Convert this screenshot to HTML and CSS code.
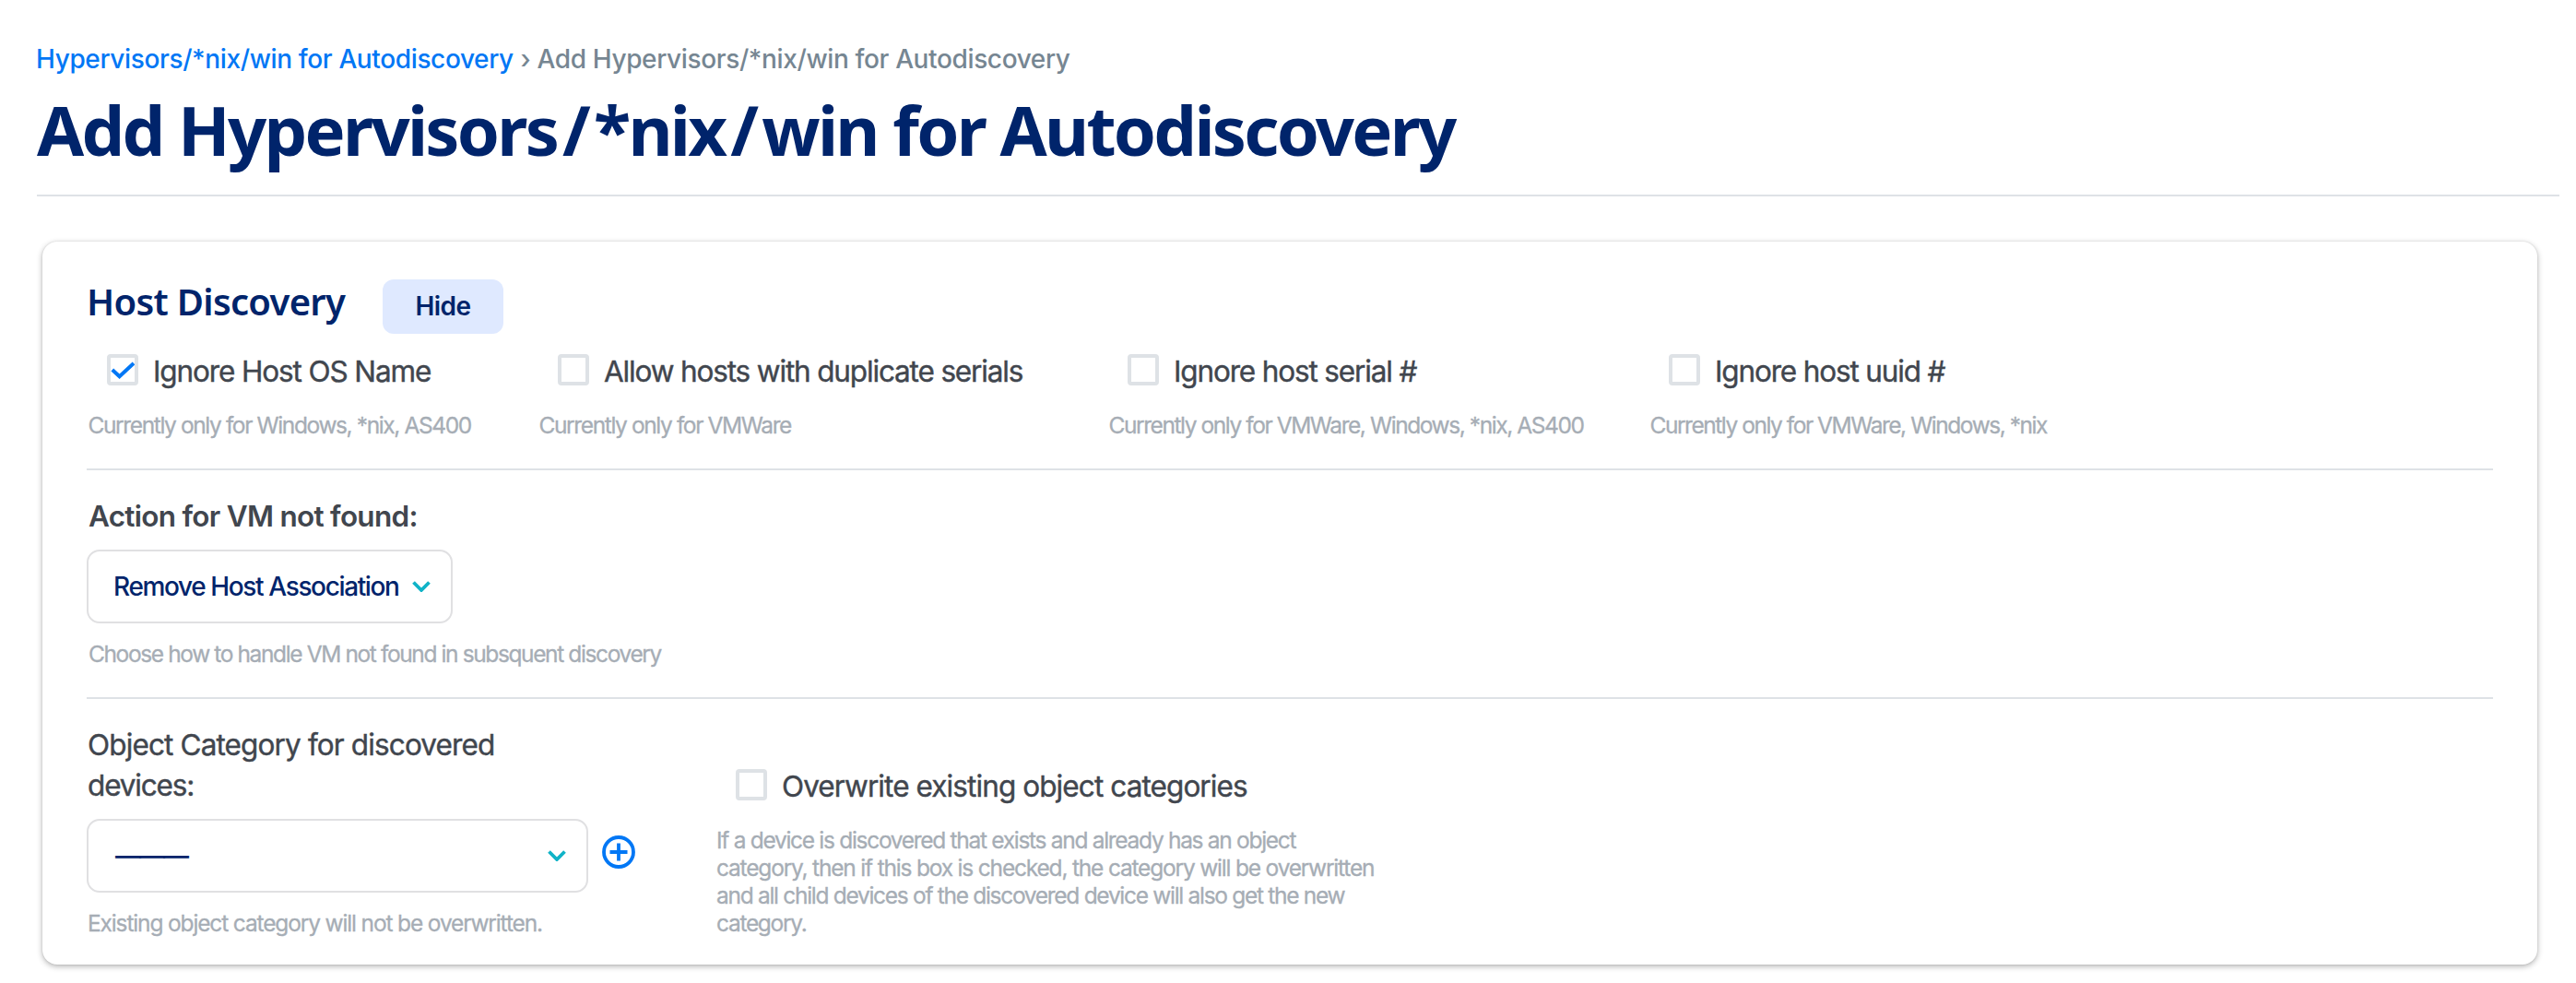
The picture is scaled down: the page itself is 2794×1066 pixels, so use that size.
FILE: index.html
```html
<!DOCTYPE html>
<html lang="en">
<head>
<meta charset="utf-8">
<title>Add Hypervisors/*nix/win for Autodiscovery</title>
<link rel="stylesheet" href="styles.css">
</head>
<body>
<header class="page-header">
  <nav class="breadcrumb">
    <a class="crumb-link" href="#">Hypervisors/*nix/win for Autodiscovery</a>
    <span class="crumb-sep">›</span>
    <span class="crumb-current">Add Hypervisors/*nix/win for Autodiscovery</span>
  </nav>
  <h1 class="page-title">Add Hypervisors<span class="slash">/</span>*nix<span class="slash">/</span>win for Autodiscovery</h1>
</header>

<main class="card">
  <div class="card-head">
    <h2 class="card-title">Host Discovery</h2>
    <button class="btn-hide" type="button">Hide</button>
  </div>

  <section class="options">
    <div class="option">
      <label class="check">
        <span class="box"><svg class="tick" viewBox="0 0 26 26"><path d="M1.8 13 L9.6 20.3 L25 6"/></svg></span>
        <span class="label label-os">Ignore Host OS Name</span>
      </label>
      <p class="help">Currently only for Windows, *nix, AS400</p>
    </div>
    <div class="option">
      <label class="check"><span class="box"></span><span class="label">Allow hosts with duplicate serials</span></label>
      <p class="help">Currently only for VMWare</p>
    </div>
    <div class="option">
      <label class="check"><span class="box"></span><span class="label">Ignore host serial #</span></label>
      <p class="help help-snug">Currently only for VMWare, Windows, *nix, AS400</p>
    </div>
    <div class="option">
      <label class="check"><span class="box"></span><span class="label">Ignore host uuid #</span></label>
      <p class="help help-tight">Currently only for VMWare, Windows, *nix</p>
    </div>
  </section>

  <section class="vm-action">
    <h3 class="field-title">Action for VM not found:</h3>
    <div class="select select-action">
      <span class="select-value">Remove Host Association</span>
      <svg class="chevron" viewBox="0 0 20 12"><path d="M1.5 1.5 L10 10 L18.5 1.5"/></svg>
    </div>
    <p class="help">Choose how to handle VM not found in subsquent discovery</p>
  </section>

  <section class="category">
    <div class="category-field">
      <div class="label label-category">Object Category for discovered<br><span class="label">devices:</span></div>
      <div class="select-row">
        <div class="select select-category">
          <span class="select-empty">———</span>
          <svg class="chevron" viewBox="0 0 20 12"><path d="M1.5 1.5 L10 10 L18.5 1.5"/></svg>
        </div>
        <svg class="add" viewBox="0 0 36 36"><circle cx="18" cy="18" r="16"/><path d="M8.5 18 H27.5 M18 8.5 V27.5"/></svg>
      </div>
      <p class="help help-existing">Existing object category will not be overwritten.</p>
    </div>
    <div class="category-overwrite">
      <label class="check"><span class="box"></span><span class="label label-overwrite">Overwrite existing object categories</span></label>
      <p class="help help-overwrite">If a device is discovered that exists and already has an object<br><span class="loose">category, then if this box is checked, the category will be overwritten</span><br>and all child devices of the discovered device will also get the new<br>category.</p>
    </div>
  </section>
</main>
</body>
</html>
```
FILE: styles.css
```css
* { box-sizing: border-box; }
body {
  margin: 0;
  min-height: 1066px;
  background: #fff;
  color: #41464e;
  font-family: Inter, "Liberation Sans", sans-serif;
}
h1, h2, h3, p { margin: 0; }

.page-header {
  margin: 0 18px 0 40px;
  padding: 44px 0 20px;
  border-bottom: 2px solid #dee2e6;
}
.breadcrumb {
  display: flex;
  font-size: 28px;
  font-weight: 450;
  line-height: 40px;
  white-space: nowrap;
  color: #768692;
}
.crumb-link { margin-left: -1px; width: 525.5px; color: #0077f5; text-decoration: none; letter-spacing: -.37px; }
.crumb-sep { width: 18px; }
.crumb-current { letter-spacing: -.37px; }
.page-title {
  margin-top: 7px;
  font: 700 74px/100px "Noto Sans", "Open Sans", sans-serif;
  letter-spacing: -2.72px;
  color: #00246b;
  white-space: nowrap;
}
.slash { margin: 0 6px; }

.card {
  width: 2706px;
  height: 784px;
  margin: 49px 0 0 46px;
  padding: 35px 48px 30px;
  border-radius: 16px;
  background: #fff;
  box-shadow: 0 2px 6px rgba(0, 0, 0, .3), 0 0 2px rgba(0, 0, 0, .12);
}
.card-head { display: flex; height: 65px; }
.card-title {
  width: 321px;
  font: 600 40px/60px "Noto Sans", "Open Sans", sans-serif;
  letter-spacing: -.708px;
  color: #00246b;
}
.btn-hide {
  width: 131px;
  height: 59px;
  margin-top: 6px;
  padding: 0;
  border: 0;
  border-radius: 12px;
  background: #dfe9ff;
  color: #00246b;
  font: 600 28px/59px Inter, sans-serif;
  letter-spacing: -.56px;
}

.options {
  display: grid;
  grid-template-columns: 489px 618px 587px 1fr;
  padding: 20px 0 32px;
  border-bottom: 2px solid #dee2e6;
}
.check { display: flex; align-items: flex-start; gap: 16px; height: 40px; padding-left: 22px; }
.box {
  width: 34px;
  height: 34px;
  margin-top: 2px;
  border: 4px solid #dee2e6;
  border-radius: 4px;
}
.tick { display: block; width: 26px; height: 26px; fill: none; stroke: #0077f5; stroke-width: 4; }
.label { font-size: 31.5px; line-height: 40px; letter-spacing: -1.15px; white-space: nowrap; -webkit-text-stroke: .4px; }
.check .label { line-height: 42px; }
.check .label-os { letter-spacing: -1.12px; }
.check .label-overwrite { letter-spacing: -.906px; }
.help {
  margin-top: 24px;
  margin-left: 1.5px;
  font-size: 24.5px;
  line-height: 30px;
  letter-spacing: -1.385px;
  color: #a6adb5;
  white-space: nowrap;
  -webkit-text-stroke: .3px;
}
.help-snug { letter-spacing: -1.43px; }
.help-tight { letter-spacing: -1.46px; }
.help-existing { letter-spacing: -1.144px; }
.help-overwrite { margin-left: 1px; letter-spacing: -1.295px; }
.loose { letter-spacing: -1.19px; }

.vm-action { height: 248px; padding-top: 30px; border-bottom: 2px solid #dee2e6; }
.field-title { margin-left: 2px; font-size: 31.5px; font-weight: 600; line-height: 40px; letter-spacing: -.72px; }
.select {
  display: flex;
  align-items: center;
  justify-content: space-between;
  height: 80px;
  padding: 0 22px 0 29px;
  border: 2px solid #e0e0e2;
  border-radius: 14px;
  color: #00246b;
  font-size: 28px;
  font-weight: 500;
  line-height: 40px;
  white-space: nowrap;
}
.select-action { width: 397px; margin-top: 16px; padding-left: 27px; }
.select-value { letter-spacing: -1.37px; }
.select-empty { letter-spacing: -2px; }
.chevron { width: 20px; height: 12px; flex: none; fill: none; stroke: #10b3c7; stroke-width: 3.8; }
.vm-action .help { margin: 18px 0 0 2px; }

.category { display: flex; align-items: flex-end; height: 258px; }
.category-field { width: 682px; }
.category-field .label { line-height: 44px; }
.label-category { margin: 0 0 14px 1px; letter-spacing: -.863px; }
.select-row { display: flex; gap: 15px; }
.select-category { width: 544px; }
.add { width: 36px; height: 36px; margin-top: 18px; fill: none; stroke: #0077f5; stroke-width: 3.8; }
.category-field .help { margin: 18px 0 0 1px; }
```
